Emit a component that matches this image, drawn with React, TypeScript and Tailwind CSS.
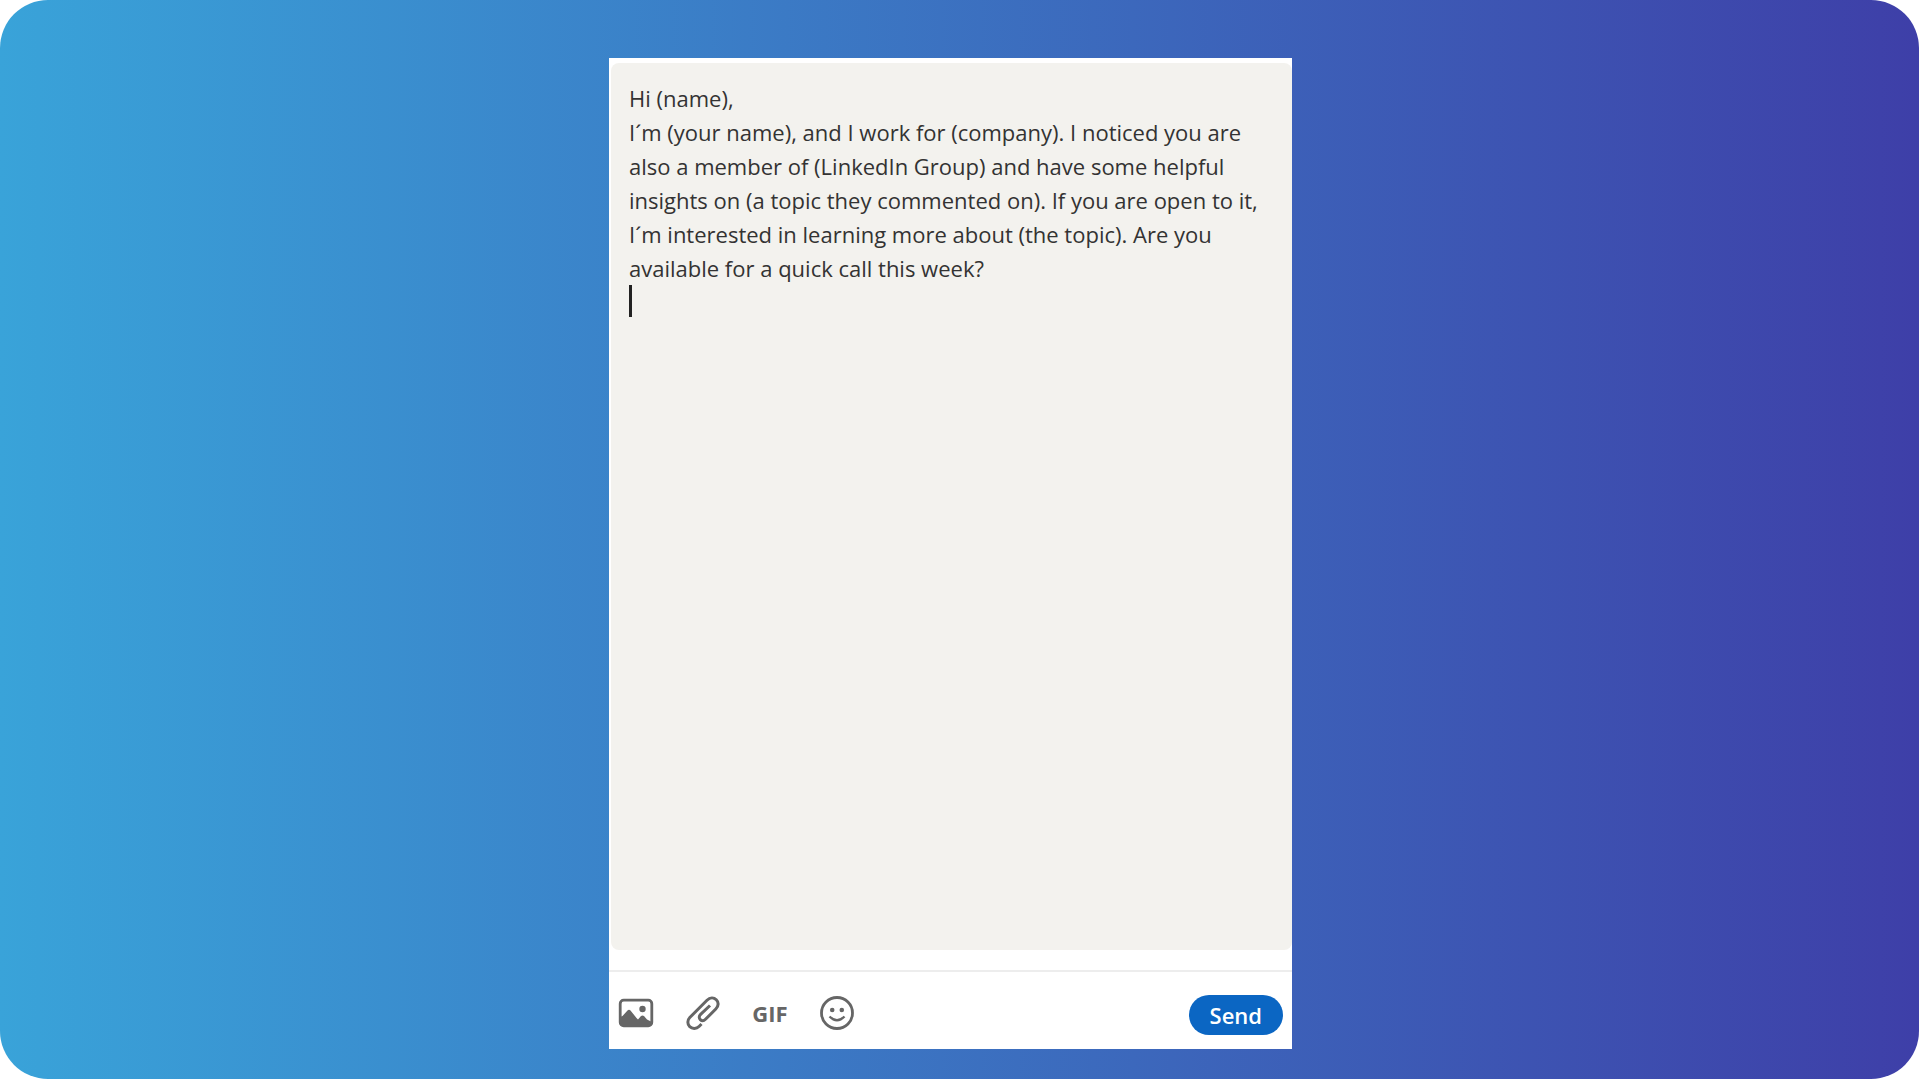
import React, { useState } from 'react';

const TEMPLATE = `Hi (name),
I´m (your name), and I work for (company). I noticed you are also a member of (LinkedIn Group) and have some helpful insights on (a topic they commented on). If you are open to it, I´m interested in learning more about (the topic). Are you available for a quick call this week?
`;

const ImageIcon = () => (
  <svg viewBox="0 0 36 30" className="h-[30px] w-9" aria-hidden="true">
    <rect x="2.2" y="2.2" width="31.6" height="25.6" rx="3.5" fill="none" stroke="#666" strokeWidth="2.8" />
    <circle cx="24.5" cy="11" r="3.2" fill="#666" />
    <path d="M2 19l2.500-1 5-5.500q1.500-1.700 3 0l6 7.500 1.500 1.500 3-3.500q1.500-1.200 3 0l3 3.500 4 2v2.500q0 2-3 2H5q-3 0-3-3z" fill="#666" />
  </svg>
);

const ClipIcon = () => (
  <svg viewBox="0 0 36 36" className="h-9 w-9" fill="none" stroke="#666" strokeWidth="3" aria-hidden="true">
    <path d="M16.500 29l-2.500 2.500c-2.500 2.500-6.800 2.600-9.300.200-2.500-2.500-2.400-6.700.100-9.200L22 5.200c3-3 6.800-3 9.300-.500 2.500 2.400 2.500 6.300-.500 9.300L20.500 24.300c-1.700 1.700-3.800 1.700-5.200.300-1.500-1.400-1.400-3.500.300-5.200L25 10.500" />
  </svg>
);

const SmileIcon = () => (
  <svg viewBox="0 0 36 36" className="h-9 w-9" aria-hidden="true">
    <circle cx="18" cy="18" r="15.500" fill="none" stroke="#666" strokeWidth="2.800" />
    <circle cx="13.200" cy="15" r="2.300" fill="#666" />
    <circle cx="22.800" cy="15" r="2.300" fill="#666" />
    <path d="M10.500 21.500Q18 29 25.500 21.500" fill="none" stroke="#666" strokeWidth="2.400" />
  </svg>
);

export default function App() {
  const [message, setMessage] = useState(TEMPLATE);

  return (
    <div className="min-h-screen bg-white pr-px pb-px font-['Open_Sans',sans-serif]">
      <main className="flex min-h-[calc(100vh-1px)] justify-center rounded-[48px] bg-linear-to-r/srgb from-[#39a3d9] to-[#3e3fa8] pt-[58px] pr-[18px] pb-[30px]">
        <form
          className="flex w-[683px] max-w-full flex-col bg-white"
          onSubmit={(e) => e.preventDefault()}
        >
          {/* Message box */}
          <div className="relative mt-[5px] ml-0.5 flex flex-1 rounded-lg bg-[#f3f2ee]">
            <textarea
              aria-label="Message"
              value={message}
              onChange={(e) => setMessage(e.target.value)}
              className="w-full flex-1 resize-none overflow-hidden bg-transparent pt-[18px] pr-7 pl-[18px] text-[22px] leading-[34px] text-[#333] outline-none"
            />
            {/* Caret */}
            <span className="absolute top-[222px] left-[18px] h-8 w-[3px] bg-[#222]" />
          </div>

          {/* Toolbar */}
          <div className="mt-5 flex h-[79px] items-center border-t-2 border-[#ededed] pt-1 pr-[9px] pl-[9px]">
            <div className="flex items-center gap-[31px]">
              <button type="button" aria-label="Attach an image">
                <ImageIcon />
              </button>
              <button type="button" aria-label="Attach a file">
                <ClipIcon />
              </button>
              <button type="button" className="w-9 text-center text-[22px] leading-9 font-bold text-[#666]">
                GIF
              </button>
              <button type="button" aria-label="Add an emoji">
                <SmileIcon />
              </button>
            </div>
            <button
              type="submit"
              className="mt-1 ml-auto h-10 rounded-full bg-[#0b66c3] px-[21px] text-[22px] leading-10 font-semibold text-white"
            >
              Send
            </button>
          </div>
        </form>
      </main>
    </div>
  );
}
